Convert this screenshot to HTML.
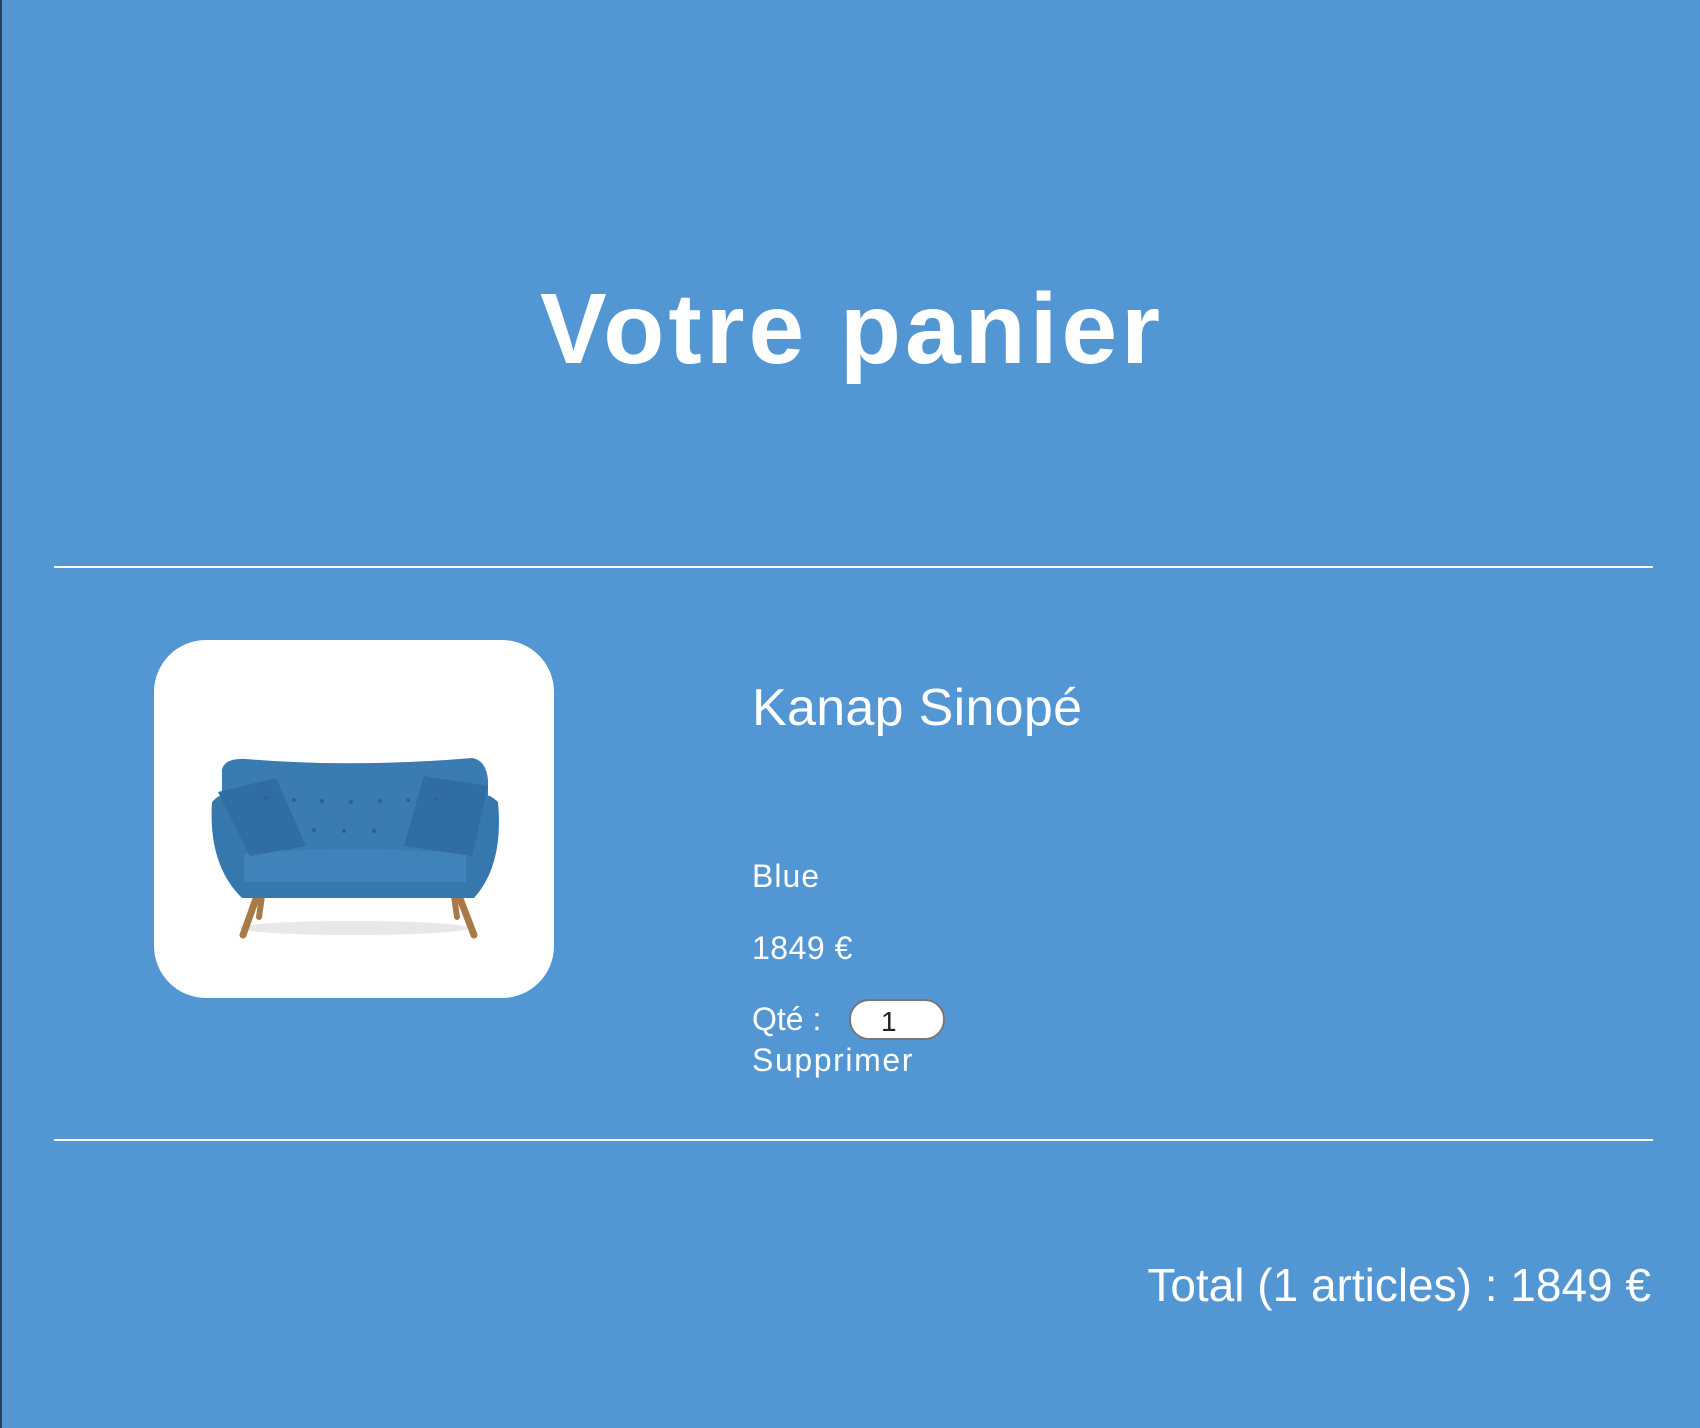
<!DOCTYPE html>
<html><head><meta charset="utf-8"><style>
html,body{margin:0;padding:0}
body{width:1700px;height:1428px;background:#5396d4;position:relative;overflow:hidden;font-family:"Liberation Sans",sans-serif;color:#fff;border-left:2px solid #2a3f5a;box-sizing:border-box}
.t{position:absolute;line-height:1;white-space:nowrap}
.hr{position:absolute;left:52px;width:1599px;height:2px;background:#fff}
.card{position:absolute;left:152px;top:640px;width:400px;height:358px;background:#fff;border-radius:52px;overflow:hidden}
.qty{position:absolute;left:847px;top:999px;width:92px;height:37px;border:2px solid #777;border-radius:20px;background:#fff;color:#222;font-size:28px;line-height:37px;box-sizing:content-box}
</style></head><body>
<div class="t" style="left:0;width:1700px;text-align:center;top:279px;font-size:100px;font-weight:bold;letter-spacing:4px">Votre panier</div>
<div class="hr" style="top:566px"></div>
<div class="card">
<svg width="400" height="358" viewBox="0 0 400 358">
<ellipse cx="200" cy="288" rx="115" ry="7" fill="#e8e8e8"/>
<path d="M103 256 L89 295" stroke="#a87a48" stroke-width="7" stroke-linecap="round"/>
<path d="M108 256 L105 277" stroke="#a87a48" stroke-width="6" stroke-linecap="round"/>
<path d="M305 256 L320 295" stroke="#a87a48" stroke-width="7" stroke-linecap="round"/>
<path d="M300 256 L303 277" stroke="#a87a48" stroke-width="6" stroke-linecap="round"/>
<path d="M68 130 Q70 118 92 119 Q200 128 318 118 Q332 120 334 140 L334 230 L68 230 Z" fill="#3a7cb1"/>
<path d="M58 162 Q70 148 84 160 L96 226 L304 226 L316 160 Q330 148 344 162 Q350 225 320 258 L88 258 Q54 225 58 162 Z" fill="#3677ad"/>
<path d="M90 214 Q200 204 312 214 L312 242 L90 242 Z" fill="#4083ba"/>
<path d="M64 152 L122 138 L152 206 L96 216 Z" fill="#2f6da2"/>
<path d="M250 206 L270 136 L334 146 L318 216 Z" fill="#2f6da2"/>
<g fill="#2a6196"><circle cx="112" cy="158" r="2"/><circle cx="140" cy="160" r="2"/><circle cx="168" cy="161" r="2"/><circle cx="197" cy="162" r="2"/><circle cx="226" cy="161" r="2"/><circle cx="254" cy="160" r="2"/><circle cx="282" cy="159" r="2"/><circle cx="160" cy="190" r="2"/><circle cx="190" cy="191" r="2"/><circle cx="220" cy="191" r="2"/></g>
</svg>
</div>
<div class="t" style="left:750px;top:682px;font-size:52px;letter-spacing:0.3px">Kanap Sinopé</div>
<div class="t" style="left:750px;top:860px;font-size:32px;letter-spacing:1px">Blue</div>
<div class="t" style="left:750px;top:932px;font-size:32px;letter-spacing:0.5px">1849 €</div>
<div class="t" style="left:750px;top:1003px;font-size:32px">Qté :</div>
<div class="qty"><span style="position:absolute;left:30px;top:2px">1</span></div>
<div class="t" style="left:750px;top:1044px;font-size:32px;letter-spacing:1.6px">Supprimer</div>
<div class="hr" style="top:1139px"></div>
<div class="t" style="right:49px;top:1262px;font-size:46px">Total (1 articles) : 1849 €</div>
</body></html>
